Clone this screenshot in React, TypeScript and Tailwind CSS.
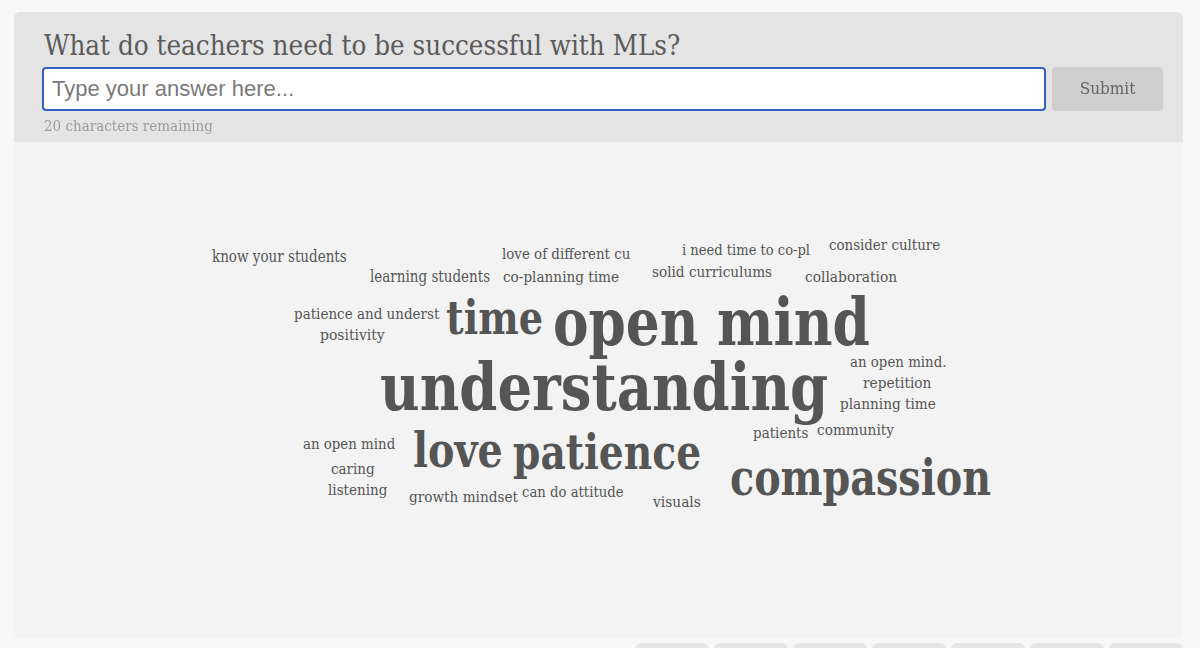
import { useLayoutEffect, useRef, useState } from "react";

type Word = { text: string; x: number; y: number; w: number; size: number };

// x = left edge, y = baseline, w = width in the cloud, all in page pixels
const words: Word[] = [
  { text: "know your students", x: 212, y: 260, w: 135, size: 16 },
  { text: "love of different cu", x: 502, y: 257, w: 128, size: 15 },
  { text: "i need time to co-pl", x: 682, y: 253, w: 128, size: 15 },
  { text: "consider culture", x: 829, y: 248, w: 111, size: 15 },
  { text: "learning students", x: 370, y: 280, w: 120, size: 16 },
  { text: "co-planning time", x: 503, y: 280, w: 116, size: 15 },
  { text: "solid curriculums", x: 652, y: 275, w: 120, size: 15 },
  { text: "collaboration", x: 805, y: 280, w: 92, size: 15 },
  { text: "patience and underst", x: 294, y: 317, w: 145, size: 15 },
  { text: "positivity", x: 320, y: 338, w: 65, size: 15 },
  { text: "time", x: 446, y: 332, w: 97, size: 46 },
  { text: "open mind", x: 553, y: 343, w: 317, size: 66 },
  { text: "an open mind.", x: 850, y: 365, w: 96, size: 15 },
  { text: "understanding", x: 380, y: 408, w: 448, size: 66 },
  { text: "repetition", x: 863, y: 386, w: 68, size: 15 },
  { text: "planning time", x: 840, y: 407, w: 96, size: 15 },
  { text: "patients", x: 753, y: 436, w: 55, size: 15 },
  { text: "community", x: 817, y: 433, w: 77, size: 15 },
  { text: "an open mind", x: 303, y: 447, w: 92, size: 15 },
  { text: "love", x: 413, y: 465, w: 90, size: 48 },
  { text: "patience", x: 513, y: 467, w: 188, size: 48 },
  { text: "caring", x: 331, y: 472, w: 44, size: 15 },
  { text: "compassion", x: 730, y: 493, w: 261, size: 50 },
  { text: "listening", x: 328, y: 493, w: 59, size: 15 },
  { text: "can do attitude", x: 522, y: 495, w: 102, size: 15 },
  { text: "growth mindset", x: 409, y: 500, w: 109, size: 15 },
  { text: "visuals", x: 653, y: 505, w: 48, size: 15 },
];

const slab = "font-['DejaVu_Serif',serif] font-stretch-condensed";

function CloudWord({ word }: { word: Word }) {
  const ref = useRef<HTMLSpanElement>(null);
  const [scale, setScale] = useState(1);
  const big = word.size >= 40;

  useLayoutEffect(() => {
    if (ref.current) setScale(word.w / ref.current.offsetWidth);
  }, [word]);

  return (
    <span
      ref={ref}
      className={`${slab} absolute origin-left whitespace-nowrap leading-none text-[#555] ${
        big ? "font-bold" : "font-normal"
      }`}
      style={{
        left: word.x - 14,
        top: word.y - 142 - word.size * 0.846 + (big ? 2 : 3),
        fontSize: word.size,
        transform: `scaleX(${scale})`,
      }}
    >
      {word.text}
    </span>
  );
}

export default function App() {
  const [answer, setAnswer] = useState("");
  const left = 20 - answer.length;

  return (
    <div className="min-h-screen bg-[#f8f8f8] pl-[14px] pr-[17px] pt-3">
      <div className="flex h-[626px] flex-col overflow-hidden rounded-md">
        <div className="bg-[#e4e4e4] pl-[28px] pr-[20px] pt-[14px] pb-[7px]">
          <h1 className={`${slab} ml-[2px] text-[27.5px] leading-[38px] text-[#5b5b5b]`}>
            What do teachers need to be successful with MLs?
          </h1>
          <div className="mt-[3px] flex gap-[6px]">
            <input
              autoFocus
              value={answer}
              maxLength={20}
              onChange={(e) => setAnswer(e.target.value)}
              placeholder="Type your answer here..."
              className="h-[44px] flex-1 rounded-[4px] border-2 border-[#2f62c4] bg-white px-[8px] font-['Liberation_Sans',sans-serif] text-[22px] text-[#333] outline-none placeholder:text-[#7a7a7a]"
            />
            <button
              type="button"
              className={`${slab} h-[44px] w-[111px] rounded-[4px] bg-[#cfcfcf] text-[17px] text-[#666]`}
            >
              Submit
            </button>
          </div>
          <p className={`${slab} ml-[2px] mt-[6px] text-[15px] leading-[18px] text-[#9c9c9c]`}>
            {left} characters remaining
          </p>
        </div>

        <div className="relative flex-1 bg-[#f3f3f3]">
          {words.map((w) => (
            <CloudWord key={w.text} word={w} />
          ))}
        </div>
      </div>

      <div className="mt-[5px] flex justify-end gap-[5px]">
        {Array.from({ length: 7 }).map((_, i) => (
          <div key={i} className="h-[24px] w-[74px] rounded-t-md bg-[#e6e6e6]" />
        ))}
      </div>
    </div>
  );
}
